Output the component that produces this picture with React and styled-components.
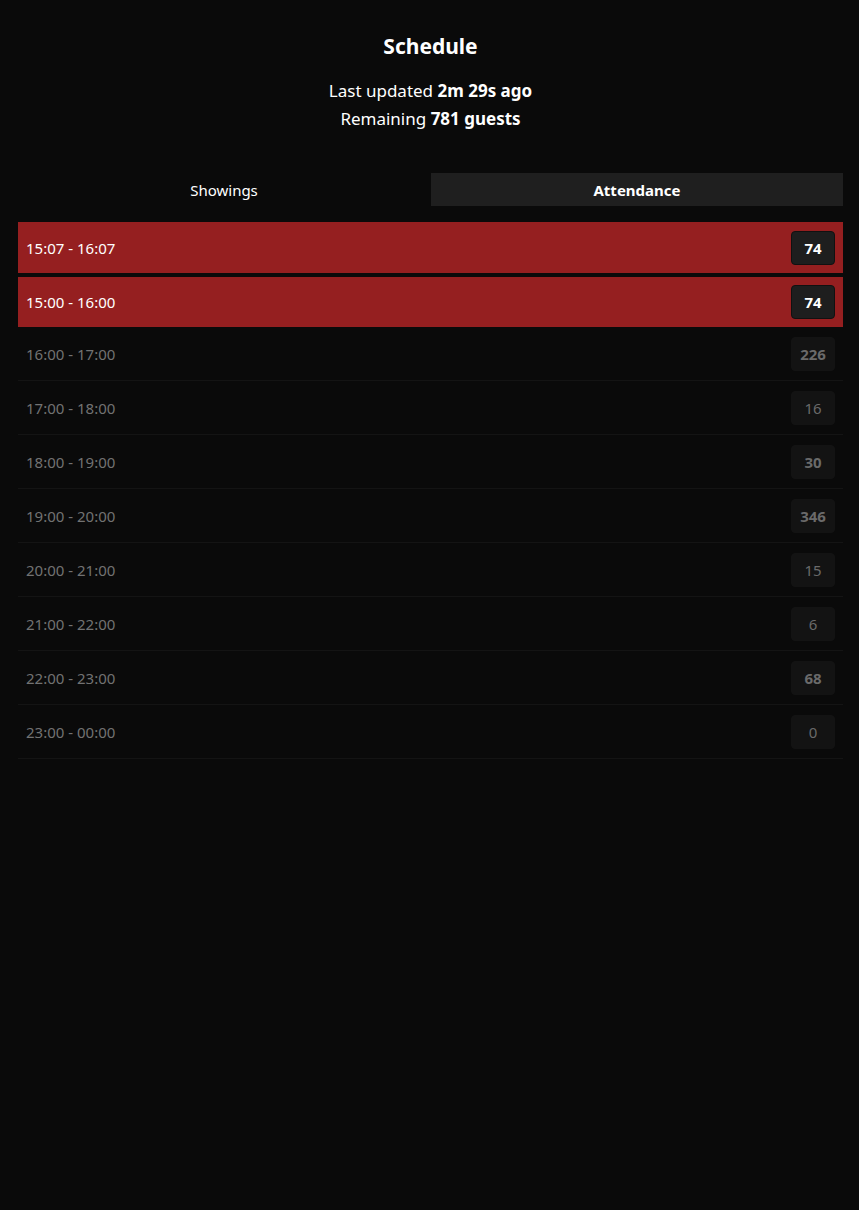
import React from "react";
import styled, { createGlobalStyle } from "styled-components";

const GlobalStyle = createGlobalStyle`
  html, body {
    margin: 0;
    padding: 0;
    background: #0a0a0a;
    color: #ffffff;
    font-family: "Noto Sans", "Open Sans", sans-serif;
  }
`;

const slots = [
  { time: "15:07 - 16:07", count: 74, live: true },
  { time: "15:00 - 16:00", count: 74, live: true },
  { time: "16:00 - 17:00", count: 226 },
  { time: "17:00 - 18:00", count: 16 },
  { time: "18:00 - 19:00", count: 30 },
  { time: "19:00 - 20:00", count: 346 },
  { time: "20:00 - 21:00", count: 15 },
  { time: "21:00 - 22:00", count: 6 },
  { time: "22:00 - 23:00", count: 68 },
  { time: "23:00 - 00:00", count: 0 },
];

export default function App() {
  return (
    <>
      <GlobalStyle />
      <Page>
        <Header>
          <Title>Schedule</Title>
          <Info>
            <div>Last updated <b>2m 29s ago</b></div>
            <div>Remaining <b>781 guests</b></div>
          </Info>
        </Header>
        <Tabs>
          <Tab>Showings</Tab>
          <Tab $active>Attendance</Tab>
        </Tabs>
        <List>
          {slots.map((s, i) => (
            <Row key={i} $live={s.live} $spaced={s.live && i > 0}>
              <Time $live={s.live}>{s.time}</Time>
              <Badge $live={s.live} $bold={s.count >= 20}>{s.count}</Badge>
            </Row>
          ))}
        </List>
      </Page>
    </>
  );
}

const Page = styled.div`
  padding: 0 16px 0 18px;
  min-height: 1210px;
  box-sizing: border-box;
`;

const Header = styled.div`
  text-align: center;
  padding-top: 31px;
`;

const Title = styled.h1`
  margin: 0;
  font-size: 21px;
  font-weight: 700;
  line-height: 30px;
`;

const Info = styled.div`
  margin-top: 16px;
  font-size: 17px;
  line-height: 28px;
  b {
    font-weight: 700;
  }
`;

const Tabs = styled.div`
  display: grid;
  grid-template-columns: 1fr 1fr;
  gap: 1px;
  margin-top: 40px;
`;

const Tab = styled.div`
  height: 33px;
  display: flex;
  align-items: center;
  justify-content: center;
  font-size: 15px;
  font-weight: ${(p) => (p.$active ? 700 : 400)};
  background: ${(p) => (p.$active ? "#1f1f1f" : "transparent")};
`;

const List = styled.div`
  margin-top: 16px;
  display: flex;
  flex-direction: column;
`;

const Row = styled.div`
  display: flex;
  align-items: center;
  justify-content: space-between;
  padding: ${(p) => (p.$live ? "0 8px" : "1px 8px 0")};
  box-sizing: border-box;
  height: ${(p) => (p.$live ? (p.$spaced ? "50px" : "51px") : "54px")};
  margin-top: ${(p) => (p.$spaced ? "4px" : "0")};
  background: ${(p) => (p.$live ? "#951f20" : "transparent")};
  border-bottom: ${(p) => (p.$live ? "none" : "1px solid #141414")};
`;

const Time = styled.span`
  font-size: 15px;
  color: ${(p) => (p.$live ? "#ffffff" : "#727272")};
`;

const Badge = styled.span`
  width: 44px;
  height: 34px;
  box-sizing: border-box;
  display: flex;
  align-items: center;
  justify-content: center;
  border-radius: 4px;
  font-size: 15px;
  font-weight: ${(p) => (p.$bold || p.$live ? 700 : 400)};
  color: ${(p) => (p.$live ? "#ffffff" : "#6a6a6a")};
  background: ${(p) => (p.$live ? "#1e1e1e" : "#131313")};
  border: 1px solid ${(p) => (p.$live ? "#111111" : "#131313")};
`;
